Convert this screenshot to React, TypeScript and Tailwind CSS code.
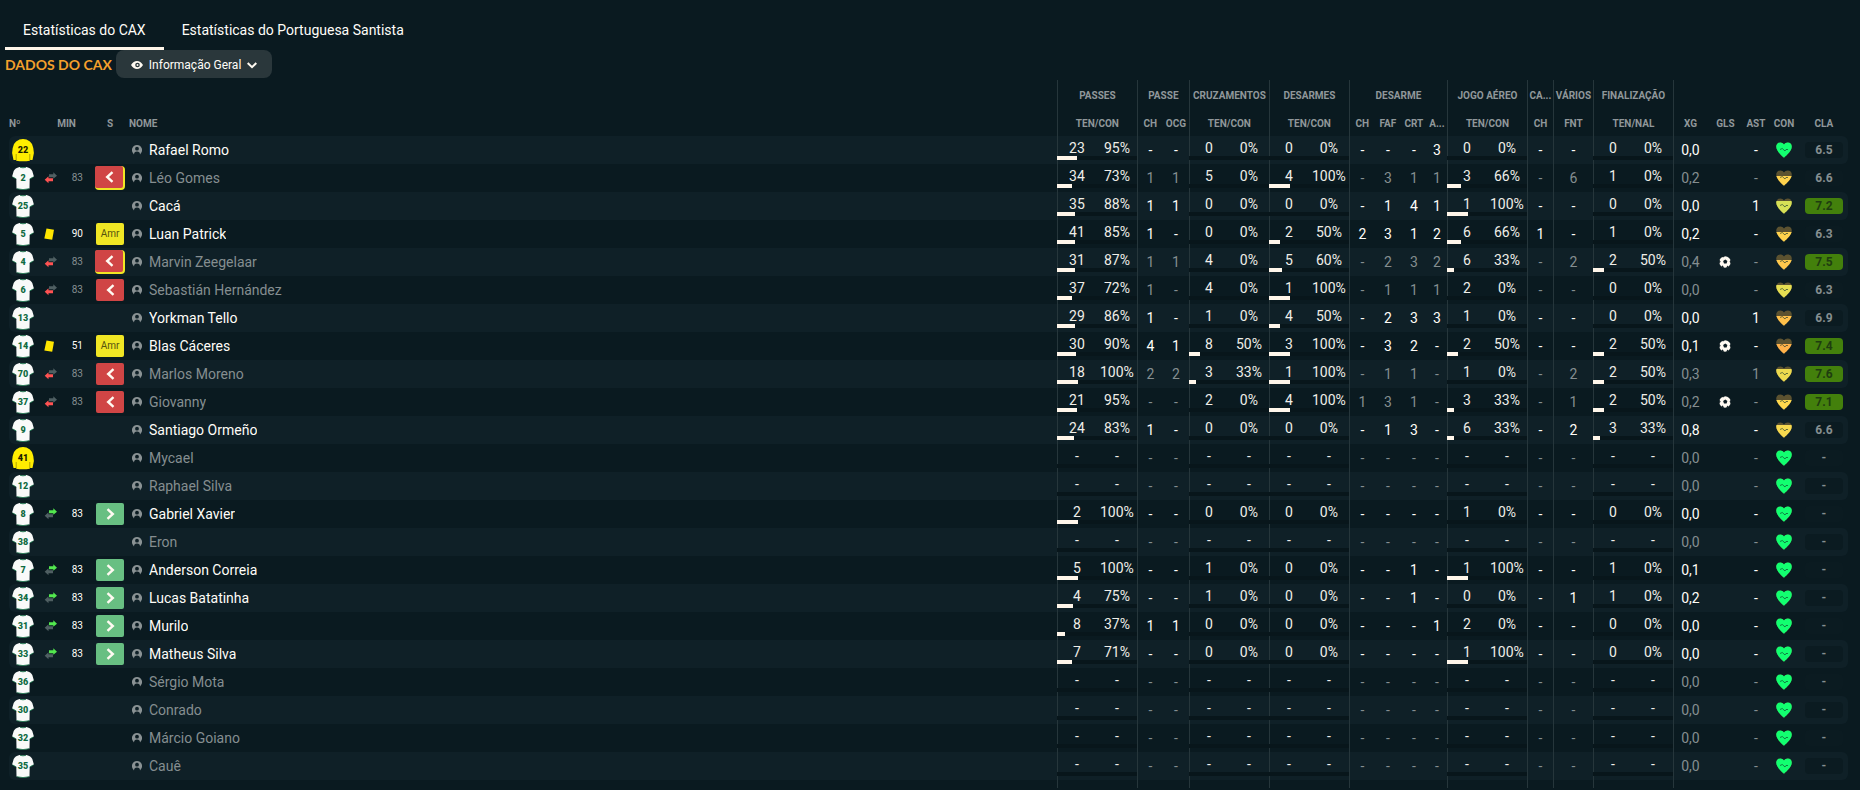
import React, { useState } from "react";
import clsx from "clsx";

type Pair = [number, number] | null;

interface Player {
  no: number;
  name: string;
  keeper?: boolean;
  dim?: boolean;
  event?: "out" | "in" | "card";
  min?: number;
  badge?: "out" | "outBooked" | "in" | "amr";
  passes: Pair;
  passe: string;
  crosses: Pair;
  tackles: Pair;
  tackle: string;
  aerial: Pair;
  misc: string;
  shots: Pair;
  xg: string;
  goal?: boolean;
  assist?: string;
  heart?: [string, number];
  rating?: string;
}

const Z: Pair = [0, 0];

const unused = (no: number, name: string, keeper = false): Player => ({
  no,
  name,
  keeper,
  dim: true,
  passes: null,
  passe: "--",
  crosses: null,
  tackles: null,
  tackle: "----",
  aerial: null,
  misc: "--",
  shots: null,
  xg: "0,0",
});

// passe = CH, OCG / tackle = CH, FAF, CRT, A... / misc = CH, FNT
const players: Player[] = [
  { no: 22, name: "Rafael Romo", keeper: true, passes: [23, 95], passe: "--", crosses: Z, tackles: Z, tackle: "---3", aerial: Z, misc: "--", shots: Z, xg: "0,0", rating: "6.5" },
  { no: 2, name: "Léo Gomes", dim: true, event: "out", min: 83, badge: "outBooked", passes: [34, 73], passe: "11", crosses: [5, 0], tackles: [4, 100], tackle: "-311", aerial: [3, 66], misc: "-6", shots: [1, 0], xg: "0,2", heart: ["#ffd24d", 6], rating: "6.6" },
  { no: 25, name: "Cacá", passes: [35, 88], passe: "11", crosses: Z, tackles: Z, tackle: "-141", aerial: [1, 100], misc: "--", shots: Z, xg: "0,0", assist: "1", heart: ["#d6e056", 3], rating: "7.2" },
  { no: 5, name: "Luan Patrick", event: "card", min: 90, badge: "amr", passes: [41, 85], passe: "1-", crosses: Z, tackles: [2, 50], tackle: "2312", aerial: [6, 66], misc: "1-", shots: [1, 0], xg: "0,2", heart: ["#ffd24d", 6], rating: "6.3" },
  { no: 4, name: "Marvin Zeegelaar", dim: true, event: "out", min: 83, badge: "outBooked", passes: [31, 87], passe: "11", crosses: [4, 0], tackles: [5, 60], tackle: "-232", aerial: [6, 33], misc: "-2", shots: [2, 50], xg: "0,4", goal: true, heart: ["#ffc84d", 6], rating: "7.5" },
  { no: 6, name: "Sebastián Hernández", dim: true, event: "out", min: 83, badge: "out", passes: [37, 72], passe: "1-", crosses: [4, 0], tackles: [1, 100], tackle: "-111", aerial: [2, 0], misc: "--", shots: Z, xg: "0,0", heart: ["#e6de52", 3], rating: "6.3" },
  { no: 13, name: "Yorkman Tello", passes: [29, 86], passe: "1-", crosses: [1, 0], tackles: [4, 50], tackle: "-233", aerial: [1, 0], misc: "--", shots: Z, xg: "0,0", assist: "1", heart: ["#ffc04a", 6], rating: "6.9" },
  { no: 14, name: "Blas Cáceres", event: "card", min: 51, badge: "amr", passes: [30, 90], passe: "41", crosses: [8, 50], tackles: [3, 100], tackle: "-32-", aerial: [2, 50], misc: "--", shots: [2, 50], xg: "0,1", goal: true, heart: ["#ffb14a", 6], rating: "7.4" },
  { no: 70, name: "Marlos Moreno", dim: true, event: "out", min: 83, badge: "out", passes: [18, 100], passe: "22", crosses: [3, 33], tackles: [1, 100], tackle: "-11-", aerial: [1, 0], misc: "-2", shots: [2, 50], xg: "0,3", assist: "1", heart: ["#ecd94f", 3], rating: "7.6" },
  { no: 37, name: "Giovanny", dim: true, event: "out", min: 83, badge: "out", passes: [21, 95], passe: "--", crosses: [2, 0], tackles: [4, 100], tackle: "131-", aerial: [3, 33], misc: "-1", shots: [2, 50], xg: "0,2", goal: true, heart: ["#ffd84e", 6], rating: "7.1" },
  { no: 9, name: "Santiago Ormeño", passes: [24, 83], passe: "1-", crosses: Z, tackles: Z, tackle: "-13-", aerial: [6, 33], misc: "-2", shots: [3, 33], xg: "0,8", heart: ["#f7d94f", 3], rating: "6.6" },
  unused(41, "Mycael", true),
  unused(12, "Raphael Silva"),
  { no: 8, name: "Gabriel Xavier", event: "in", min: 83, badge: "in", passes: [2, 100], passe: "--", crosses: Z, tackles: Z, tackle: "----", aerial: [1, 0], misc: "--", shots: Z, xg: "0,0" },
  unused(38, "Eron"),
  { no: 7, name: "Anderson Correia", event: "in", min: 83, badge: "in", passes: [5, 100], passe: "--", crosses: [1, 0], tackles: Z, tackle: "--1-", aerial: [1, 100], misc: "--", shots: [1, 0], xg: "0,1" },
  { no: 34, name: "Lucas Batatinha", event: "in", min: 83, badge: "in", passes: [4, 75], passe: "--", crosses: [1, 0], tackles: Z, tackle: "--1-", aerial: Z, misc: "-1", shots: [1, 0], xg: "0,2" },
  { no: 31, name: "Murilo", event: "in", min: 83, badge: "in", passes: [8, 37], passe: "11", crosses: Z, tackles: Z, tackle: "---1", aerial: [2, 0], misc: "--", shots: Z, xg: "0,0" },
  { no: 33, name: "Matheus Silva", event: "in", min: 83, badge: "in", passes: [7, 71], passe: "--", crosses: Z, tackles: Z, tackle: "----", aerial: [1, 100], misc: "--", shots: Z, xg: "0,0" },
  unused(36, "Sérgio Mota"),
  unused(30, "Conrado"),
  unused(32, "Márcio Goiano"),
  unused(35, "Cauê"),
];

const LINE = "border-l border-[#26363b]";

const Shirt = ({ no, keeper }: { no: number; keeper?: boolean }) => (
  <svg width="22" height="24" viewBox="0 0 22 24" className="ml-[3px] block">
    {keeper ? (
      <>
        <path d="M7.500 1.500Q11 .5 14.500 1.500Q18.500 3 20 6Q21.800 10 21.900 15L20.500 22H18.300L17.800 21V22.800Q11 23.800 4.200 22.800V21L3.700 22H1.500L.1 15Q.2 10 2 6Q3.500 3 7.500 1.500Z" fill="#ffed00" />
        <path d="M4.200 21.500V16M17.800 21.500V16" stroke="#8f8500" strokeWidth=".7" />
      </>
    ) : (
      <>
        <path d="M7.500 1Q11 2.200 14.500 1Q19 2 20.300 5L21.900 10.500L17.700 13L17.500 22.500Q11 24.500 4.500 22.500L4.300 13L.1 10.500L1.700 5Q3 2 7.500 1Z" fill="#f9faf9" />
        <path d="M.4 10.800L4.300 13M21.600 10.800L17.700 13M8 1.300Q11 2.400 14 1.300M4.700 22.700Q11 24.500 17.300 22.700" stroke="#1b7a4e" strokeWidth=".8" fill="none" />
      </>
    )}
    <text
      x="11"
      y="15"
      textAnchor="middle"
      className={clsx("font-['Roboto'] text-[9px] font-black", keeper ? "fill-[#1d1c00]" : "fill-[#0f6b41]")}
    >
      {no}
    </text>
  </svg>
);

const EventIcon = ({ type }: { type: "out" | "in" | "card" }) => {
  if (type === "card") {
    return (
      <svg width="13" height="14" viewBox="0 0 13 14">
        <path d="M2.500 1.500L10 2.700L8.200 12.800L.3 11.400Z" fill="#ffe600" />
      </svg>
    );
  }
  const out = type === "out";
  return (
    <svg width="13" height="14" viewBox="0 0 13 14">
      <path d="M5 3.200H9.300V1.200L13 4.700L9.300 7.800V6.200H5Z" fill={out ? "#4f5f62" : "#53e84f"} />
      <path d="M9 7.300H4.500V5.300L.7 8.800L4.500 12.200V10.300H9Z" fill={out ? "#ff5252" : "#4f5f62"} />
    </svg>
  );
};

const Arrow = ({ dir }: { dir: "left" | "right" }) => (
  <div
    className={clsx(
      "flex h-[22px] w-7 items-center justify-center rounded-xs",
      dir === "right" ? "bg-[#68bf82]" : "bg-[#d04545]"
    )}
  >
    <svg width="9" height="12" viewBox="0 0 9 12" fill="none" stroke="#fffaf2" strokeWidth="2.400">
      <path d={dir === "right" ? "M1.500 1.200L6.800 6L1.500 10.800" : "M7.500 1.200L2.200 6L7.500 10.800"} />
    </svg>
  </div>
);

const Badge = ({ type }: { type: NonNullable<Player["badge"]> }) => {
  if (type === "amr") {
    return (
      <div className="mx-auto h-[22px] w-7 rounded-xs bg-[#f0e624] text-center text-[10px] leading-[22px] text-[#55520f]">
        Amr
      </div>
    );
  }
  // booked before leaving: yellow card peeks out behind the red one
  if (type === "outBooked") {
    return (
      <div className="h-6 rounded-sm bg-[#f0e624]">
        <Arrow dir="left" />
      </div>
    );
  }
  return (
    <div className="flex justify-center">
      <Arrow dir={type === "in" ? "right" : "left"} />
    </div>
  );
};

const PersonIcon = () => (
  <svg width="10" height="10" viewBox="0 0 10 10" className="shrink-0">
    <path
      fillRule="evenodd"
      d="M5 0A5 5 0 0 1 8.700 8.400L8 9.500Q8 6.600 5 6.500Q2 6.600 2 9.500L1.300 8.400A5 5 0 0 1 5 0ZM5 1.800A1.900 1.900 0 1 0 5 5.600A1.900 1.900 0 1 0 5 1.800Z"
      fill="#8a9294"
    />
  </svg>
);

const Heart = ({ no, color, drop }: { no: number; color: string; drop: number }) => (
  <svg width="16" height="16" viewBox="0 0 16 16" className="mx-auto block">
    <clipPath id={`heart-${no}`}>
      <path d="M8 15.800C5 13 .2 9 .2 4.600C.2 2 2 .5 4.200 .5C5.900 .5 7.300 1.300 8 2.500C8.700 1.300 10.100 .5 11.800 .5C14 .5 15.800 2 15.800 4.600C15.800 9 11 13 8 15.800Z" />
    </clipPath>
    <g clipPath={`url(#heart-${no})`}>
      <rect width="16" height="16" fill="#5c5230" />
      <rect y={drop} width="16" height="16" fill={color} />
    </g>
    <path d="M4 7.500L6.300 6.500L9 9L10 7.500H12" fill="none" stroke="#10302a" strokeWidth=".6" />
  </svg>
);

const Ball = () => (
  <svg width="12" height="12" viewBox="0 0 12 12" className="mx-auto block">
    <circle cx="6" cy="6" r="5.800" fill="#fffaf2" />
    <path d="M6.300 3.400L8.400 5L7.600 7.600H5L4.100 5ZM2.500 0L4 1.500L6 .2ZM0 3.500L1.600 5.500L.3 8ZM12 3.800L10.600 5.500L11.800 8ZM2.400 11L3.800 9.300L5 12ZM9.600 11L8.200 9.600L7.400 12Z" fill="#0d1c22" />
  </svg>
);

const PairCell = ({ value }: { value: Pair }) => (
  <td className={clsx("p-0", LINE)}>
    <div className="-ml-px grid h-7 grid-cols-2 content-start pt-1 text-center text-sm leading-4 text-[#efeee8]">
      <span>{value ? value[0] : "-"}</span>
      <span>{value ? `${value[1]}%` : "-"}</span>
      <div className="col-span-2 h-1 bg-[#08161b]">
        <div className="h-1 bg-[#fff6ea]" style={{ width: value ? Math.round(value[1] * 0.21) : 0 }} />
      </div>
    </div>
  </td>
);

const StatCells = ({ values }: { values: string }) => (
  <>
    {values.split("").map((v, i) => (
      <td key={i} className={clsx("p-0 text-center", i === 0 && LINE)}>
        {v}
      </td>
    ))}
  </>
);

const PlayerRow = ({ player, striped }: { player: Player; striped: boolean }) => {
  const [color, drop] = player.heart ?? ["#12ff70", 0];
  const rated = player.rating && Number(player.rating) >= 7;

  return (
    <tr className={clsx("h-7 text-sm", striped && "bg-[#0f2027]", player.dim ? "text-[#858e90]" : "text-[#fffdf8]")}>
      <td className="rounded-l-md p-0">
        <Shirt no={player.no} keeper={player.keeper} />
      </td>
      <td className="py-0 pr-3 pl-1.5">
        {player.event && (
          <div className="flex items-center justify-between text-[10px]">
            <EventIcon type={player.event} />
            <span>{player.min}</span>
          </div>
        )}
      </td>
      <td className="p-0">{player.badge && <Badge type={player.badge} />}</td>
      <td className="py-0 pr-0 pl-[7px]">
        <div className="flex items-center gap-[7px]">
          <PersonIcon />
          <span className="truncate">{player.name}</span>
        </div>
      </td>
      <PairCell value={player.passes} />
      <StatCells values={player.passe} />
      <PairCell value={player.crosses} />
      <PairCell value={player.tackles} />
      <StatCells values={player.tackle} />
      <PairCell value={player.aerial} />
      <StatCells values={player.misc[0]} />
      <StatCells values={player.misc[1]} />
      <PairCell value={player.shots} />
      <td className={clsx("p-0 text-center", LINE)}>{player.xg}</td>
      <td className="p-0">{player.goal && <Ball />}</td>
      <td className="p-0 text-center">{player.assist ?? "-"}</td>
      <td className="p-0">
        <Heart no={player.no} color={color} drop={drop} />
      </td>
      <td className="rounded-r-md p-0">
        <div
          className={clsx(
            "mx-auto h-4 w-[38px] rounded-sm text-center text-xs leading-4 font-bold",
            rated ? "bg-[#43800c] text-[#1f3d10]" : "bg-[#0b1b21] text-[#858e90]"
          )}
        >
          {player.rating ?? "-"}
        </div>
      </td>
    </tr>
  );
};

const tabs = ["Estatísticas do CAX", "Estatísticas do Portuguesa Santista"];

const groups: [string, number][] = [
  ["PASSES", 1],
  ["PASSE", 2],
  ["CRUZAMENTOS", 1],
  ["DESARMES", 1],
  ["DESARME", 4],
  ["JOGO AÉREO", 1],
  ["CA...", 1],
  ["VÁRIOS", 1],
  ["FINALIZAÇÃO", 1],
];

const columns: [string, boolean][] = [
  ["TEN/CON", true],
  ["CH", true],
  ["OCG", false],
  ["TEN/CON", true],
  ["TEN/CON", true],
  ["CH", true],
  ["FAF", false],
  ["CRT", false],
  ["A...", false],
  ["TEN/CON", true],
  ["CH", true],
  ["FNT", true],
  ["TEN/NAL", true],
  ["XG", true],
  ["GLS", false],
  ["AST", false],
  ["CON", false],
  ["CLA", false],
];

export default function App() {
  const [activeTab, setActiveTab] = useState(0);

  return (
    <div className="min-h-screen bg-[#0a1a20] font-['Roboto',sans-serif] text-[#fffdf8]">
      {/* Tabs */}
      <nav className="flex h-[50px] pl-[5px]">
        {tabs.map((tab, i) => (
          <button
            key={tab}
            onClick={() => setActiveTab(i)}
            className={clsx(
              "border-b-3 px-[18px] pt-3 text-sm",
              activeTab === i ? "border-[#fff6ea]" : "border-transparent"
            )}
          >
            {tab}
          </button>
        ))}
      </nav>

      {/* Title + view picker */}
      <header className="mb-0.5 flex h-7 items-center gap-1 pl-[5px]">
        <h1 className="pt-0.5 font-['Lato',sans-serif] text-sm font-bold text-[#f5a02c]">DADOS DO CAX</h1>
        <button className="flex h-7 items-center rounded-lg bg-[#2a373b] px-[15px] pt-0.5 text-xs">
          <svg width="12" height="8" viewBox="0 0 12 8" className="mr-1.5">
            <path fillRule="evenodd" d="M0 4Q2.500 0 6 0T12 4Q9.500 8 6 8T0 4ZM6.500 1.700A2.300 2.300 0 1 0 6.500 6.300A2.300 2.300 0 1 0 6.500 1.700Z" fill="#fffaf2" />
            <circle cx="6.500" cy="4" r="1" fill="#fffaf2" />
          </svg>
          Informação Geral
          <svg width="10" height="7" viewBox="0 0 10 7" className="ml-1.5" fill="none" stroke="#fffaf2" strokeWidth="2">
            <path d="M.7 1L5 5.200L9.300 1" />
          </svg>
        </button>
      </header>

      <main className="pr-3 pl-[9px]">
        <table className="w-full table-fixed border-separate border-spacing-0">
          <colgroup>
            <col className="w-[29px]" />
            <col className="w-[57px]" />
            <col className="w-[30px]" />
            <col />
            <col className="w-20" />
            <col className="w-[26px]" />
            <col className="w-[26px]" />
            <col className="w-20" />
            <col className="w-20" />
            <col className="w-[26px]" />
            <col className="w-[26px]" />
            <col className="w-[26px]" />
            <col className="w-5" />
            <col className="w-20" />
            <col className="w-[26px]" />
            <col className="w-10" />
            <col className="w-20" />
            <col className="w-[34px]" />
            <col className="w-[37px]" />
            <col className="w-6" />
            <col className="w-8" />
            <col className="w-12" />
          </colgroup>
          <thead className="text-[10px] whitespace-nowrap text-[#90979a]">
            <tr className="h-[31px]">
              <td colSpan={4} />
              {groups.map(([label, span]) => (
                <th key={label} colSpan={span} scope="colgroup" className={clsx("p-0 font-bold", LINE)}>
                  {label}
                </th>
              ))}
              <td colSpan={5} className={LINE} />
            </tr>
            <tr className="h-[25px]">
              <th className="p-0 text-left font-bold">Nº</th>
              <th className="p-0 font-bold">MIN</th>
              <th className="p-0 font-bold">S</th>
              <th className="p-0 pl-1 text-left font-bold">NOME</th>
              {columns.map(([label, line], i) => (
                <th key={i} className={clsx("p-0 font-bold", line && LINE)}>
                  {label}
                </th>
              ))}
            </tr>
          </thead>
          <tbody>
            {players.map((player, i) => (
              <PlayerRow key={player.no} player={player} striped={i % 2 === 0} />
            ))}
          </tbody>
          <tfoot>
            <tr className="h-2">
              <td colSpan={4} className="p-0" />
              {groups.map(([label, span]) => (
                <td key={label} colSpan={span} className={clsx("p-0", LINE)} />
              ))}
              <td colSpan={5} className={clsx("p-0", LINE)} />
            </tr>
          </tfoot>
        </table>
      </main>
    </div>
  );
}
